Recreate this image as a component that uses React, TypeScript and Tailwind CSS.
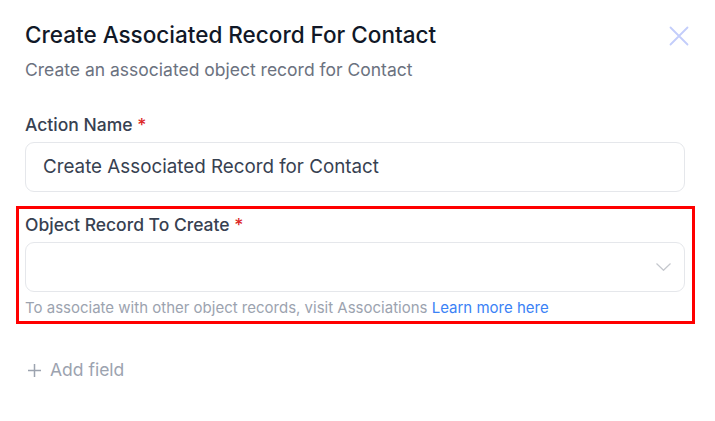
function Label({ children }: { children: string }) {
  return (
    <p className="text-[17.5px] leading-[24px] font-medium text-[#374151]">
      {children} <span className="text-[#dc2626]">*</span>
    </p>
  );
}

export default function App() {
  return (
    <div className="min-h-screen bg-white pl-[25px] pr-[30px] pt-[20px] font-['Inter',sans-serif]">
      <div className="flex items-start justify-between">
        <div>
          <h2 className="text-[22.5px] leading-[30px] font-medium text-[#111827]">
            Create Associated Record For Contact
          </h2>
          <p className="mt-[8px] text-[17.5px] leading-[24px] text-[#6b7280]">
            Create an associated object record for Contact
          </p>
        </div>
        <button className="-mr-[4px] mt-[6px] text-[#c3cdfb]">
          <svg width="20" height="20" viewBox="0 0 20 20" fill="none" stroke="currentColor" strokeWidth="1.8" strokeLinecap="round">
            <path d="M1.5 1.5L18.5 18.5M18.5 1.5L1.5 18.5" />
          </svg>
        </button>
      </div>

      <div className="mt-[31px]">
        <Label>Action Name</Label>
        <div className="mt-[5px] flex h-[50px] items-center rounded-[9px] border border-[#e5e7eb] px-[17px] text-[18.8px] text-[#374151]">
          Create Associated Record for Contact
        </div>
      </div>

      <div className="-ml-[9px] -mr-[10px] mt-[14px] border-[3px] border-[#ff0000] pl-[6px] pr-[7px] pt-[4px] pb-[3px]">
        <Label>Object Record To Create</Label>
        <div className="mt-[5px] flex h-[50px] items-center justify-end rounded-[9px] border border-[#e5e7eb] pr-[13px]">
          <svg width="15" height="8" viewBox="0 0 15 8" fill="none" stroke="#c4c7cd" strokeWidth="1.2">
            <path d="M0.5 0.5L7.5 7.3L14.5 0.5" />
          </svg>
        </div>
        <p className="mt-[6px] text-[15px] leading-[20px] text-[#9ca3af]">
          To associate with other object records, visit Associations{" "}
          <a className="text-[#3b82f6]">Learn more here</a>
        </p>
      </div>

      <button className="mt-[34px] ml-[3px] flex items-center gap-[9px] text-[17.5px] leading-[24px] text-[#9ca3af]">
        <svg width="13" height="13" viewBox="0 0 13 13" fill="none" stroke="currentColor" strokeWidth="1.5">
          <path d="M6.5 0V13M0 6.5H13" />
        </svg>
        Add field
      </button>
    </div>
  );
}
